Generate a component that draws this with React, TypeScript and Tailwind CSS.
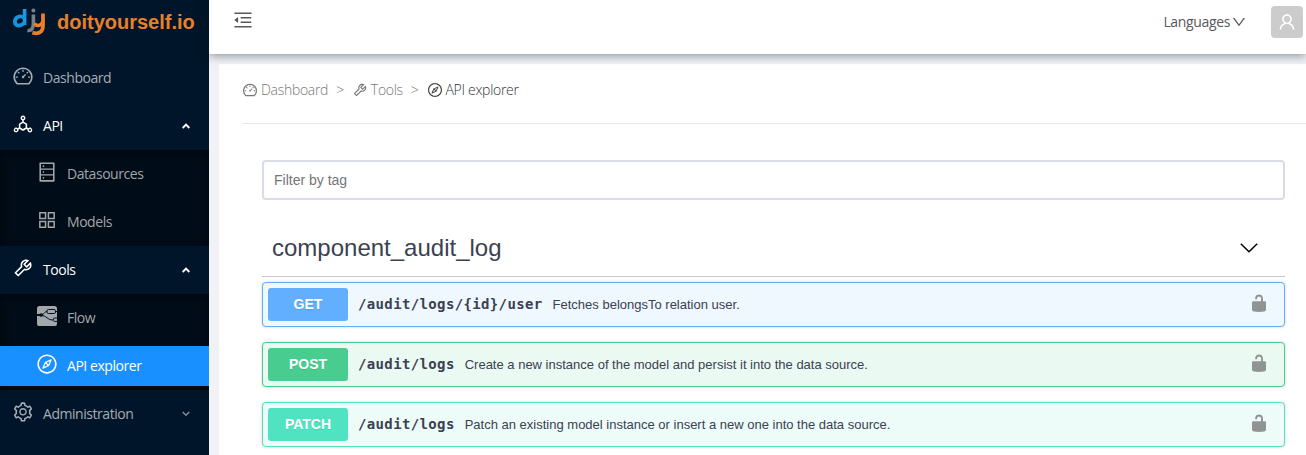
import type { ReactNode } from "react";
import {
  AiOutlineAppstore,
  AiOutlineCompass,
  AiOutlineDashboard,
  AiOutlineDatabase,
  AiOutlineDeploymentUnit,
  AiOutlineDown,
  AiOutlineMenuFold,
  AiOutlineSetting,
  AiOutlineTool,
  AiOutlineUser,
} from "react-icons/ai";

function Logo() {
  return (
    <svg width="34" height="28" viewBox="0 0 34 28" fill="none" strokeLinecap="butt">
      <path d="M12.6 1V17" stroke="#1b9be0" strokeWidth="3.6" />
      <path d="M12.4 10C7.8 6.6 2.9 9.4 2.9 13.6C2.9 18 8 19.4 12.8 14.2" stroke="#1593dc" strokeWidth="3.8" />
      <path d="M21.4 6.4V15.6C21.4 20.4 19.4 23.2 15.4 22.4" stroke="#77818a" strokeWidth="3.6" />
      <circle cx="21.4" cy="2.6" r="2" fill="#77818a" />
      <path d="M22.6 15.2C24 18.4 28.4 18.6 31 13.5" stroke="#ea7f25" strokeWidth="3.4" />
      <path d="M31 5.4V17.4C31 23.4 27.4 26.8 20.4 24.6" stroke="#ea7f25" strokeWidth="3.8" />
    </svg>
  );
}

function FlowIcon() {
  return (
    <svg width="20" height="20" viewBox="0 0 20 20" fill="none">
      <rect width="20" height="20" rx="2.6" fill="#a3a7ab" />
      <g stroke="#00101c" strokeWidth="1">
        <path d="M0 8.5H4C8 8.5 7 5.5 10 5.5" />
        <path d="M0 9.5H4C10 9.5 10 14 16 14" />
        <rect x="10" y="3.5" width="8.5" height="4" rx="1.4" />
        <path d="M18.5 5.5H20" />
        <path d="M20 12H17.5C16.8 12 16.4 12.4 16.4 13V14.4C16.4 15 16.8 15.4 17.5 15.4H20" />
        <rect x="2.6" y="7.8" width="3" height="2.5" rx="1" />
      </g>
    </svg>
  );
}

function Caret({ open }: { open?: boolean }) {
  return (
    <svg className="mr-[19px] ml-auto" width="8" height="6" viewBox="0 0 8 6" fill="none">
      <path
        d={open ? "M0.7 5L4 1.7L7.3 5" : "M0.7 1L4 4.3L7.3 1"}
        stroke={open ? "#fff" : "#808a94"}
        strokeWidth={open ? 1.9 : 1.5}
      />
    </svg>
  );
}

function MenuItem({ icon, label, bright, caret }: { icon: ReactNode; label: string; bright?: boolean; caret?: ReactNode }) {
  return (
    <div className={`flex h-12 items-center pl-3 ${bright ? "text-white" : "text-[#a6adb4]"}`}>
      <span className="mb-1 flex w-[22px] justify-center">{icon}</span>
      <span className="mb-0.5 ml-[9px]">{label}</span>
      {caret}
    </div>
  );
}

function SubItem({ icon, label, active }: { icon: ReactNode; label: string; active?: boolean }) {
  return (
    <div className={`my-1 flex h-10 items-center pl-9 ${active ? "bg-[#1890ff] text-white" : "text-[#a3a7ab]"}`}>
      <span className="mb-1 flex w-[22px] justify-center">{icon}</span>
      <span className="mb-0.5 ml-[9px]">{label}</span>
    </div>
  );
}

function SubMenu({ children }: { children: ReactNode }) {
  return (
    <div className="flex h-24 flex-col justify-between bg-[#000c17] shadow-[inset_0_2px_8px_rgba(0,0,0,0.45)]">
      {children}
    </div>
  );
}

function Lock() {
  return (
    <svg className="mr-[18px] mb-[3px] ml-auto" width="14" height="18" viewBox="0 0 14 18">
      <path d="M4.1 5.3V4.2A3 3.3 0 0 1 10 4.2V8" fill="none" stroke="#909594" strokeWidth="1.9" />
      <path d="M1.2 7.2H12.8Q14 7.2 14 8.4V15.4Q14 17 12.4 17.5Q7 18.4 1.6 17.5Q0 17 0 15.4V8.4Q0 7.2 1.2 7.2Z" fill="#909594" />
    </svg>
  );
}

const operations = [
  {
    method: "GET",
    path: "/audit/logs/{id}/user",
    text: "Fetches belongsTo relation user.",
    box: "border-[#61affe] bg-[#eff7ff]",
    badge: "bg-[#61affe]",
  },
  {
    method: "POST",
    path: "/audit/logs",
    text: "Create a new instance of the model and persist it into the data source.",
    box: "border-[#49cc90] bg-[#ebf9f3]",
    badge: "bg-[#49cc90]",
  },
  {
    method: "PATCH",
    path: "/audit/logs",
    text: "Patch an existing model instance or insert a new one into the data source.",
    box: "border-[#50e3c2] bg-[#edfcf9]",
    badge: "bg-[#50e3c2]",
  },
];

export default function App() {
  return (
    <div className="flex h-[455px] w-[1306px] overflow-hidden bg-[#f0f2f5] font-['Open_Sans',sans-serif] text-[14px]">
      <aside className="w-[209px] shrink-0 bg-[#001529] tracking-[-0.45px]">
        <div className="flex h-[54px] items-start pt-2 pl-3 font-['Liberation_Sans',sans-serif]">
          <Logo />
          <span className="ml-[11px] text-[20px] leading-7 font-bold tracking-normal text-[#e8802a]">doityourself.io</span>
        </div>
        <MenuItem icon={<AiOutlineDashboard size={22} />} label="Dashboard" />
        <MenuItem icon={<AiOutlineDeploymentUnit size={22} />} label="API" bright caret={<Caret open />} />
        <SubMenu>
          <SubItem icon={<AiOutlineDatabase size={22} />} label="Datasources" />
          <SubItem icon={<AiOutlineAppstore size={22} />} label="Models" />
        </SubMenu>
        <MenuItem icon={<AiOutlineTool size={22} />} label="Tools" bright caret={<Caret open />} />
        <SubMenu>
          <SubItem icon={<FlowIcon />} label="Flow" />
          <SubItem icon={<AiOutlineCompass size={22} />} label="API explorer" active />
        </SubMenu>
        <MenuItem icon={<AiOutlineSetting size={22} />} label="Administration" caret={<Caret />} />
      </aside>

      <div className="flex min-w-0 flex-1 flex-col">
        <header className="z-10 flex h-[54px] shrink-0 items-start bg-white pr-[3px] pl-[23px] text-[#595959] shadow-[0_1px_10px_rgba(0,21,41,0.5)]">
          <AiOutlineMenuFold className="mt-[9px]" size={22} />
          <div className="ml-auto flex h-[43px] items-center">
            <span className="tracking-[-0.35px]">Languages</span>
            <AiOutlineDown className="ml-px" size={16} />
          </div>
          <div className="mt-1.5 ml-6 flex size-8 items-center justify-center rounded-[4px] bg-[#ccc] text-white">
            <AiOutlineUser size={20} />
          </div>
        </header>

        <main className="mt-2.5 ml-2.5 flex-1 bg-white pl-[23px]">
          <nav className="flex h-[60px] items-center border-b border-[#e8e8e8] pb-2 font-light tracking-[-0.3px] text-[#777]">
            <AiOutlineDashboard size={16} />
            <span className="ml-[3px]">Dashboard</span>
            <span className="mx-2">&gt;</span>
            <AiOutlineTool size={16} />
            <span className="ml-[3px]">Tools</span>
            <span className="mx-2">&gt;</span>
            <AiOutlineCompass className="text-[#444]" size={16} />
            <span className="ml-[3px] text-[#333]">API explorer</span>
          </nav>

          <section className="mr-[21px] ml-5 pt-9 font-['Liberation_Sans',sans-serif] text-[#3b4151]">
            <div className="flex h-10 items-center rounded-[4px] border-2 border-[#d8dde7] pl-2.5 text-[14px] text-[#757575]">
              Filter by tag
            </div>
            <div className="mt-5 mb-[5px] flex h-[57px] items-center border-b border-[rgba(59,65,81,0.3)] pr-[27px] pl-2.5">
              <h2 className="text-[24px] leading-8">component_audit_log</h2>
              <svg className="ml-auto" width="18" height="10" viewBox="0 0 18 10" fill="none">
                <path d="M0.8 0.8L9 8.7L17.2 0.8" stroke="#000" strokeWidth="1.5" />
              </svg>
            </div>
            {operations.map((op) => (
              <div
                key={op.method}
                className={`mb-[15px] flex h-[45px] items-center rounded-[4px] border pl-[5px] shadow-[0_0_3px_rgba(0,0,0,0.19)] ${op.box}`}
              >
                <span
                  className={`flex h-[33px] w-20 items-center justify-center rounded-[3px] text-[14px] font-bold text-white [text-shadow:0_1px_0_rgba(0,0,0,0.1)] ${op.badge}`}
                >
                  {op.method}
                </span>
                <span className="ml-2.5 font-['DejaVu_Sans_Mono',monospace] text-[14px] font-bold tracking-[0.36px]">{op.path}</span>
                <span className="ml-2.5 text-[13px]">{op.text}</span>
                <Lock />
              </div>
            ))}
          </section>
        </main>
      </div>
    </div>
  );
}
